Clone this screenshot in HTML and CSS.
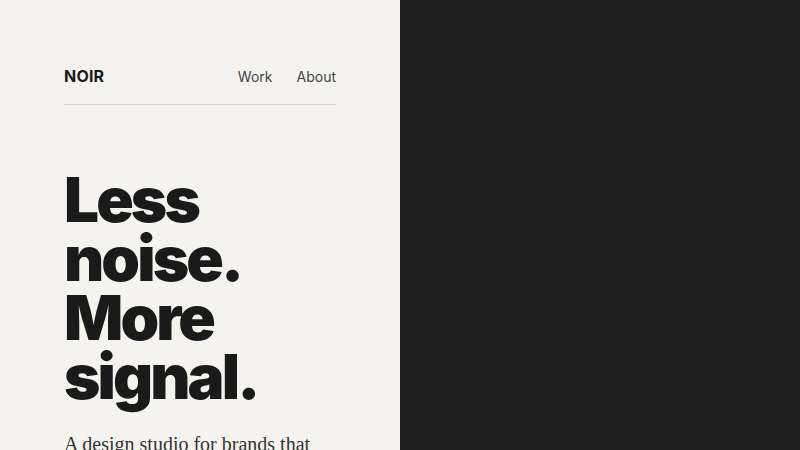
FILE: index.html
```html
<!DOCTYPE html>
<html>
<head>
<meta charset="utf-8">
<link rel="stylesheet" href="styles.css">
</head>
<body>
<div class="page">
  <section class="left">
    <header class="nav">
      <div class="logo">NOIR</div>
      <nav class="links"><a>Work</a><a>About</a></nav>
    </header>
    <h1 class="headline">Less<br>noise.<br>More<br>signal.</h1>
    <p class="lede">A design studio for brands that want to be heard without shouting.</p>
  </section>
  <section class="right"></section>
</div>
</body>
</html>
```
FILE: styles.css
```css
html, body { margin: 0; padding: 0; }
body { width: 800px; height: 450px; overflow: hidden; font-family: Inter, "Noto Sans", sans-serif; }
.page { display: flex; height: 450px; }
.left { width: 400px; box-sizing: border-box; padding: 48px 64px 0; background: #f5f3ee; }
.right { width: 400px; background: #1f1f1f; }
.nav { height: 56px; display: flex; align-items: center; justify-content: space-between; border-bottom: 1px solid #d8d5d0; }
.logo { font-weight: 700; font-size: 16px; color: #1a1a1a; letter-spacing: 0.2px; }
.links { display: flex; gap: 24px; }
.links a { font-size: 14px; color: #444; }
.headline { margin: 65px 0 0; font-size: 62px; line-height: 59px; font-weight: 900; color: #1a1a1a; letter-spacing: -2.9px; }
.lede { margin: 23px 0 0; font-family: "Liberation Serif", serif; font-size: 20px; line-height: 1.5; color: #333; }
```
